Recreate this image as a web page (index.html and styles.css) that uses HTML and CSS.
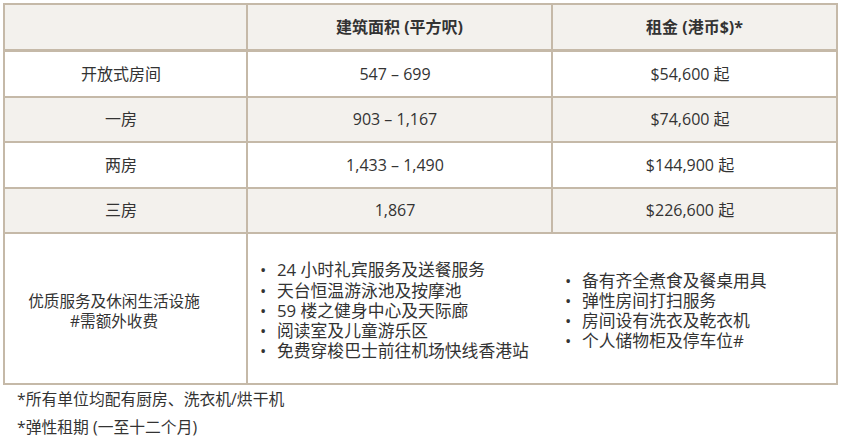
FILE: index.html
```html
<!DOCTYPE html>
<html lang="zh-CN">
<head>
<meta charset="utf-8">
<title>租金</title>
<link rel="stylesheet" href="styles.css">
</head>
<body>
<table class="rates">
  <colgroup>
    <col class="c1"><col class="c2"><col class="c3">
  </colgroup>
  <thead>
    <tr>
      <th></th>
      <th>建筑面积 (平方呎)</th>
      <th>租金 (港币$)*</th>
    </tr>
  </thead>
  <tbody>
    <tr class="odd"><td>开放式房间</td><td>547 – 699</td><td>$54,600 起</td></tr>
    <tr class="even"><td>一房</td><td>903 – 1,167</td><td>$74,600 起</td></tr>
    <tr class="odd"><td>两房</td><td>1,433 – 1,490</td><td>$144,900 起</td></tr>
    <tr class="even"><td>三房</td><td>1,867</td><td>$226,600 起</td></tr>
    <tr class="odd last">
      <td class="amen-label">优质服务及休闲生活设施<br>#需额外收费</td>
      <td colspan="2" class="amen-cell">
        <div class="amen">
          <ul class="amen-list first">
            <li>24 小时礼宾服务及送餐服务</li>
            <li>天台恒温游泳池及按摩池</li>
            <li>59 楼之健身中心及天际廊</li>
            <li>阅读室及儿童游乐区</li>
            <li>免费穿梭巴士前往机场快线香港站</li>
          </ul>
          <ul class="amen-list">
            <li>备有齐全煮食及餐桌用具</li>
            <li>弹性房间打扫服务</li>
            <li>房间设有洗衣及乾衣机</li>
            <li>个人储物柜及停车位#</li>
          </ul>
        </div>
      </td>
    </tr>
  </tbody>
</table>
<div class="notes">
  <p>*所有单位均配有厨房、洗衣机/烘干机</p>
  <p>*弹性租期 (一至十二个月)</p>
</div>
</body>
</html>
```
FILE: styles.css
```css
html, body {
  background: #ffffff;
}
body {
  margin: 3px;
  font-family: "Open Sans", "Noto Sans CJK SC", sans-serif;
  font-size: 16px;
  color: #333333;
}
.rates {
  width: 835px;
  border-collapse: separate;
  border-spacing: 2px;
  background: #c5b9a8;
  table-layout: fixed;
}
.c1 { width: 241px; }
.c2 { width: 303px; }
.c3 { width: 283px; }
.rates th {
  height: 44px;
  padding: 0;
  background: #f3f1ed;
  font-weight: 700;
  text-align: center;
  vertical-align: middle;
  border-bottom: 1px solid #c5b9a8;
  line-height: 20px;
}
.rates td {
  height: 43.5px;
  padding: 0 9px 0 0;
  text-align: center;
  vertical-align: middle;
  line-height: 20px;
}
.rates tr.odd td { background: #ffffff; }
.rates tr.even td { background: #f3f1ed; }
.rates tr.last td {
  height: 149px;
  padding-top: 5px;
  box-sizing: border-box;
}
.rates td.amen-label {
  padding-right: 23px;
  font-size: 15.6px;
}
.rates td.amen-cell {
  text-align: left;
  padding-left: 12px;
  padding-right: 0;
}
.amen {
  display: flex;
  align-items: center;
}
.amen-list {
  margin: 0;
  padding: 0;
  list-style: none;
  font-size: 16.8px;
  line-height: 20.25px;
}
.amen-list.first {
  width: 305px;
  flex: none;
}
.amen-list li {
  display: flex;
}
.amen-list li::before {
  content: "•";
  flex: none;
  width: 17px;
}
.notes {
  padding-left: 14px;
  font-size: 15.8px;
}
.notes p {
  margin: 0;
  line-height: 28px;
}
```
